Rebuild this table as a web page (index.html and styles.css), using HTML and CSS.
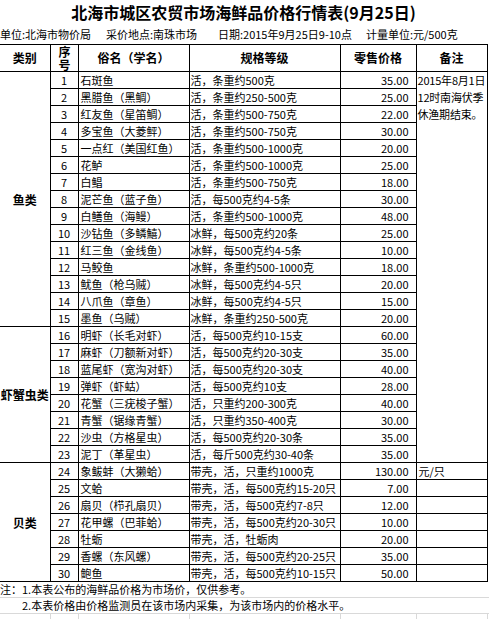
FILE: index.html
```html
<!DOCTYPE html>
<html lang="zh-CN">
<head>
<meta charset="utf-8">
<title>北海市城区农贸市场海鲜品价格行情表</title>
<link rel="stylesheet" href="styles.css">
</head>
<body>
<div class="sheet">
  <h1 class="title">北海市城区农贸市场海鲜品价格行情表(9月25日)</h1>
  <div class="meta">
    <span class="m1">单位:北海市物价局</span>
    <span class="m2">采价地点:南珠市场</span>
    <span class="m3">日期:2015年9月25日9-10点</span>
    <span class="m4">计量单位:元/500克</span>
  </div>
  <table class="prices">
    <colgroup>
      <col class="c-cat"><col class="c-no"><col class="c-name"><col class="c-spec"><col class="c-price"><col class="c-note">
    </colgroup>
    <thead>
      <tr><th class="cat">类别</th><th class="no"><span class="no-head">序号</span></th><th>俗名（学名）</th><th>规格等级</th><th>零售价格</th><th>备注</th></tr>
    </thead>
    <tbody>
      <tr><td class="cat" rowspan="15">鱼类</td><td class="no">1</td><td class="name">石斑鱼</td><td class="spec">活，条重约500克</td><td class="price">35.00</td><td class="note" rowspan="23"><span class="note-text">2015年8月1日<br>12时南海伏季<br>休渔期结束。</span></td></tr>
      <tr><td class="no">2</td><td class="name">黑腊鱼（黑鲷）</td><td class="spec">活，条重约250-500克</td><td class="price">25.00</td></tr>
      <tr><td class="no">3</td><td class="name">红友鱼（星笛鲷）</td><td class="spec">活，条重约500-750克</td><td class="price">22.00</td></tr>
      <tr><td class="no">4</td><td class="name">多宝鱼（大菱鲆）</td><td class="spec">活，条重约500-750克</td><td class="price">30.00</td></tr>
      <tr><td class="no">5</td><td class="name">一点红（美国红鱼）</td><td class="spec">活，条重约500-1000克</td><td class="price">20.00</td></tr>
      <tr><td class="no">6</td><td class="name">花鲈</td><td class="spec">活，条重约500-1000克</td><td class="price">25.00</td></tr>
      <tr><td class="no">7</td><td class="name">白鲳</td><td class="spec">活，条重约500-750克</td><td class="price">18.00</td></tr>
      <tr><td class="no">8</td><td class="name">泥芒鱼（蓝子鱼）</td><td class="spec">活，每500克约4-5条</td><td class="price">30.00</td></tr>
      <tr><td class="no">9</td><td class="name">白鳝鱼（海鳗）</td><td class="spec">活，条重约500-1000克</td><td class="price">48.00</td></tr>
      <tr><td class="no">10</td><td class="name">沙钻鱼（多鳞鱚）</td><td class="spec">冰鲜，每500克约20条</td><td class="price">25.00</td></tr>
      <tr><td class="no">11</td><td class="name">红三鱼（金线鱼）</td><td class="spec">冰鲜，每500克约4-5条</td><td class="price">10.00</td></tr>
      <tr><td class="no">12</td><td class="name">马鲛鱼</td><td class="spec">冰鲜，条重约500-1000克</td><td class="price">18.00</td></tr>
      <tr><td class="no">13</td><td class="name">鱿鱼（枪乌贼）</td><td class="spec">冰鲜，每500克约4-5只</td><td class="price">20.00</td></tr>
      <tr><td class="no">14</td><td class="name">八爪鱼（章鱼）</td><td class="spec">冰鲜，每500克约4-5只</td><td class="price">15.00</td></tr>
      <tr><td class="no">15</td><td class="name">墨鱼（乌贼）</td><td class="spec">冰鲜，条重约250-500克</td><td class="price">20.00</td></tr>
      <tr><td class="cat" rowspan="8">虾蟹虫类</td><td class="no">16</td><td class="name">明虾（长毛对虾）</td><td class="spec">活，每500克约10-15支</td><td class="price">60.00</td></tr>
      <tr><td class="no">17</td><td class="name">麻虾（刀额新对虾）</td><td class="spec">活，每500克约20-30支</td><td class="price">35.00</td></tr>
      <tr><td class="no">18</td><td class="name">蓝尾虾（宽沟对虾）</td><td class="spec">活，每500克约20-30支</td><td class="price">40.00</td></tr>
      <tr><td class="no">19</td><td class="name">弹虾（虾蛄）</td><td class="spec">活，每500克约10支</td><td class="price">28.00</td></tr>
      <tr><td class="no">20</td><td class="name">花蟹（三疣梭子蟹）</td><td class="spec">活，只重约200-300克</td><td class="price">40.00</td></tr>
      <tr><td class="no">21</td><td class="name">青蟹（锯缘青蟹）</td><td class="spec">活，只重约350-400克</td><td class="price">30.00</td></tr>
      <tr><td class="no">22</td><td class="name">沙虫（方格星虫）</td><td class="spec">活，每500克约20-30条</td><td class="price">35.00</td></tr>
      <tr><td class="no">23</td><td class="name">泥丁（革星虫）</td><td class="spec">活，每斤500克约30-40条</td><td class="price">35.00</td></tr>
      <tr><td class="cat" rowspan="7">贝类</td><td class="no">24</td><td class="name">象鲅蚌（大獭蛤）</td><td class="spec">带壳，活，只重约1000克</td><td class="price">130.00</td><td class="remark">元/只</td></tr>
      <tr><td class="no">25</td><td class="name">文蛤</td><td class="spec">带壳，活，每500克约15-20只</td><td class="price">7.00</td><td class="remark"></td></tr>
      <tr><td class="no">26</td><td class="name">扇贝（栉孔扇贝）</td><td class="spec">带壳，活，每500克约7-8只</td><td class="price">12.00</td><td class="remark"></td></tr>
      <tr><td class="no">27</td><td class="name">花甲螺（巴菲蛤）</td><td class="spec">带壳，活，每500克约20-30只</td><td class="price">10.00</td><td class="remark"></td></tr>
      <tr><td class="no">28</td><td class="name">牡蛎</td><td class="spec">带壳，活，牡蛎肉</td><td class="price">20.00</td><td class="remark"></td></tr>
      <tr><td class="no">29</td><td class="name">香螺（东风螺）</td><td class="spec">带壳，活，每500克约20-25只</td><td class="price">35.00</td><td class="remark"></td></tr>
      <tr><td class="no">30</td><td class="name">鲍鱼</td><td class="spec">带壳，活，每500克约10-15只</td><td class="price">50.00</td><td class="remark"></td></tr>
    </tbody>
  </table>
  <div class="notes">
    <div class="note-line">注：1.本表公布的海鲜品价格为市场价，仅供参考。</div>
    <div class="note-line indent">2.本表价格由价格监测员在该市场内采集，为该市场内的价格水平。</div>
    <div class="grid-row">
      <span class="g g-cat"></span><span class="g g-no"></span><span class="g g-name"></span><span class="g g-spec"></span><span class="g g-price"></span><span class="g g-note"></span>
    </div>
  </div>
</div>
</body>
</html>
```

FILE: styles.css
```css
* {
  box-sizing: border-box;
}

html,
body {
  margin: 0;
  padding: 0;
  background: #ffffff;
}

body {
  font-family: "Noto Sans CJK SC", "Noto Sans", "DejaVu Sans", sans-serif;
  font-size: 11px;
  color: #000000;
}

.sheet {
  width: 489px;
  overflow: hidden;
}

.title {
  margin: 0;
  width: 487px;
  height: 24px;
  font-size: 16px;
  line-height: 24px;
  font-weight: bold;
  text-align: center;
  white-space: nowrap;
}

.meta {
  display: flex;
  height: 20px;
  line-height: 20px;
  font-size: 11px;
  white-space: nowrap;
}

.meta .m1 { width: 106px; }
.meta .m2 { width: 112px; }
.meta .m3 { width: 148px; }
.meta .m4 { flex: 1; }

.prices {
  border-collapse: collapse;
  table-layout: fixed;
  width: 487px;
}

.c-cat { width: 50px; }
.c-no { width: 28px; }
.c-name { width: 111px; }
.c-spec { width: 151px; }
.c-price { width: 76px; }
.c-note { width: 71px; }

.prices th,
.prices td {
  border: 1px solid #000000;
  padding: 0 1px;
  white-space: nowrap;
  overflow: hidden;
}

.prices thead tr {
  height: 27px;
}

.prices th {
  font-size: 12px;
  font-weight: bold;
  line-height: 16px;
  text-align: center;
  vertical-align: middle;
}

.prices th.no {
  padding: 0;
  vertical-align: top;
}

.no-head {
  display: block;
  margin: 0 auto;
  height: 26px;
  width: 14px;
  writing-mode: vertical-rl;
  text-orientation: upright;
  font-size: 12px;
  line-height: 14px;
  letter-spacing: 1px;
  padding-top: 1px;
}

.prices tbody tr {
  height: 17px;
}

.prices td {
  line-height: 15px;
  vertical-align: bottom;
}

.prices .cat {
  border-left: none;
  font-size: 12px;
  font-weight: bold;
  text-align: center;
  vertical-align: middle;
  overflow: visible;
  padding: 0;
}

.prices td.no {
  text-align: center;
  padding: 0;
}

.prices td.name {
  padding-left: 2px;
}

.prices td.spec {
  padding-left: 1px;
}

.prices td.price {
  text-align: right;
  padding-right: 7px;
}

.prices td.note {
  vertical-align: top;
  padding-left: 1px;
  padding-right: 0;
}

.note-text {
  display: block;
  line-height: 17px;
  white-space: nowrap;
  letter-spacing: -0.2px;
}

.prices td.remark {
  padding-left: 2px;
}

.notes {
  width: 489px;
}

.note-line {
  height: 16px;
  line-height: 15px;
  border-bottom: 1px solid #d9d9d9;
  white-space: nowrap;
}

.note-line.indent {
  padding-left: 22px;
}

.grid-row {
  display: flex;
  height: 8px;
}

.g {
  display: block;
  height: 100%;
  border-right: 1px solid #d9d9d9;
}

.g-cat { width: 51px; }
.g-no { width: 28px; }
.g-name { width: 111px; }
.g-spec { width: 151px; }
.g-price { width: 76px; }
.g-note { width: 71px; }
```
